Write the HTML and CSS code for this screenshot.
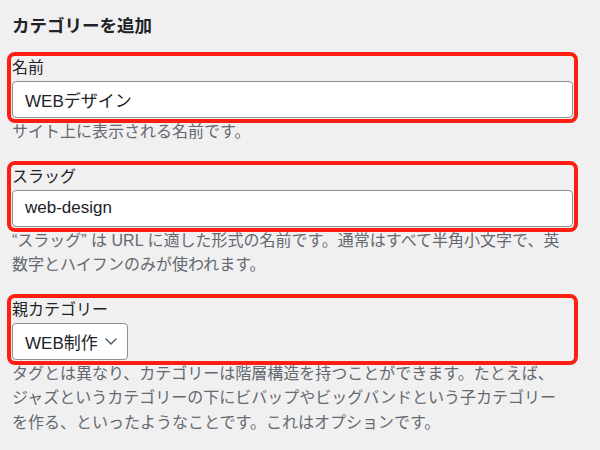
FILE: index.html
```html
<!DOCTYPE html>
<html lang="ja">
<head>
<meta charset="utf-8">
<title>カテゴリーを追加</title>
<link rel="stylesheet" href="styles.css">
</head>
<body>
<div class="form">
  <h2 class="title">カテゴリーを追加</h2>

  <div class="field">
    <label class="label" for="tag-name">名前</label>
    <input class="text-input" id="tag-name" type="text" value="WEBデザイン">
  </div>
  <p class="help">サイト上に表示される名前です。</p>

  <div class="field">
    <label class="label" for="tag-slug">スラッグ</label>
    <input class="text-input" id="tag-slug" type="text" value="web-design">
  </div>
  <p class="help">“スラッグ” は URL に適した形式の名前です。通常はすべて半角小文字で、英<br>数字とハイフンのみが使われます。</p>

  <div class="field">
    <div class="label">親カテゴリー</div>
    <div class="select">
      <span class="select-value">WEB制作</span>
      <svg class="chevron" width="12" height="7" viewBox="0 0 12 7"><path d="M1 1 L6 6 L11 1" fill="none" stroke="#50575e" stroke-width="1.4" stroke-linecap="round" stroke-linejoin="round"/></svg>
    </div>
  </div>
  <p class="help">タグとは異なり、カテゴリーは階層構造を持つことができます。たとえば、<br>ジャズというカテゴリーの下にビバップやビッグバンドという子カテゴリー<br>を作る、といったようなことです。これはオプションです。</p>
</div>
</body>
</html>
```

FILE: styles.css
```css
html, body {
  margin: 0;
  padding: 0;
  background: #f0f0f1;
}

body {
  font-family: "Liberation Sans", "Noto Sans CJK JP", sans-serif;
  color: #1d2327;
  padding: 14px 12px 0 12px;
}

.form {
  width: 561px;
}

.title {
  margin: 0;
  font-size: 17.5px;
  line-height: 25px;
  font-weight: 700;
  color: #1d2327;
}

.field {
  margin-top: 18px;
  outline: 4px solid #fe1e12;
  outline-offset: 1px;
  border-radius: 3px;
}

.help + .field {
  margin-top: 21px;
}

.label {
  display: block;
  font-size: 16px;
  line-height: 21px;
  margin-bottom: 3px;
  color: #1d2327;
}

.text-input {
  display: block;
  box-sizing: border-box;
  width: 100%;
  height: 37px;
  margin: 0;
  padding: 0 12px;
  border: 1px solid #8c8f94;
  border-radius: 4px;
  background: #fff;
  font-family: "Liberation Sans", "Noto Sans CJK JP", sans-serif;
  font-size: 17px;
  color: #1d2327;
}

.select {
  box-sizing: border-box;
  width: 116px;
  height: 37px;
  display: flex;
  align-items: center;
  justify-content: space-between;
  padding: 0 10px 0 12px;
  border: 1px solid #8c8f94;
  border-radius: 4px;
  background: #fff;
  font-size: 17px;
  color: #1d2327;
}

.chevron {
  display: block;
}

.help {
  margin: 2px 0 0 0;
  font-size: 16px;
  line-height: 24.5px;
  color: #646970;
  white-space: nowrap;
}
```
